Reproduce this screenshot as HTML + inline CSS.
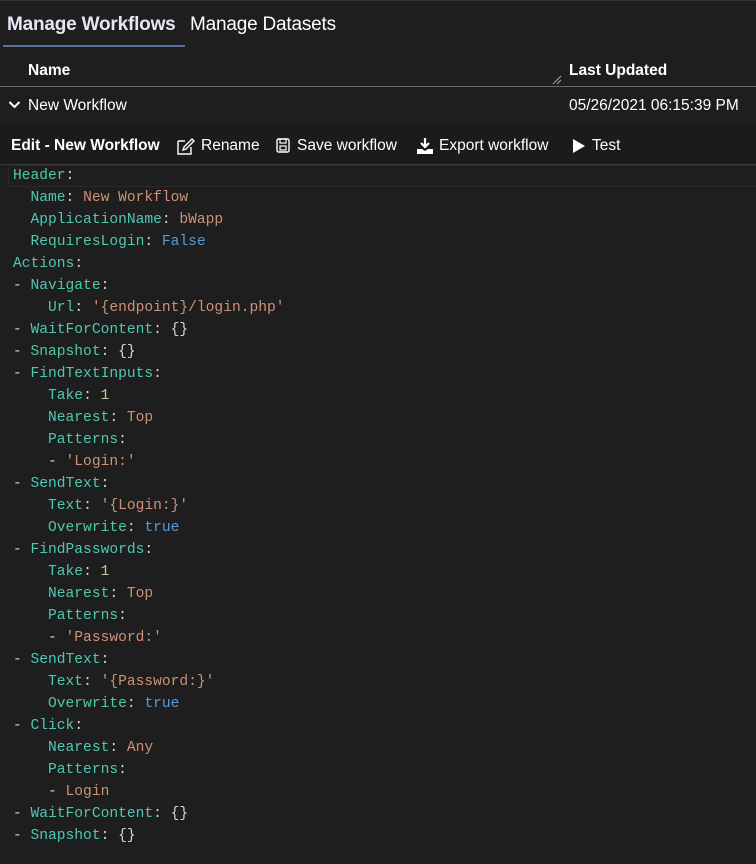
<!DOCTYPE html>
<html><head><meta charset="utf-8"><style>
*{margin:0;padding:0;box-sizing:border-box}
body{width:756px;height:864px;background:#1f1e1e;color:#fff;font-family:"Liberation Sans",sans-serif;overflow:hidden;position:relative;border-top:1px solid #333}
.abs{position:absolute;white-space:nowrap}
.tab1{left:7px;top:13px;font-size:19px;font-weight:bold;color:#e4e8f4;letter-spacing:-0.2px}
.tab2{left:190px;top:13px;font-size:19px;color:#fff;letter-spacing:-0.2px}
.ul{left:3px;top:44px;width:182px;height:2px;background:#5a6d9c}
.th{font-size:15.5px;font-weight:bold;top:61px}
.hline{left:0;top:85px;width:756px;height:1px;background:#6a6a6a}
.row{font-size:15.5px;top:96px}
.tb{left:0;top:124px;width:756px;height:40px;background:#1b1b1b;border-bottom:1px solid #3a3a3a}
.tbt{font-size:15.5px;top:136px}
.code{position:absolute;left:13px;top:164px;font-family:"Liberation Mono",monospace;font-size:14.6px;line-height:22px;color:#d4d4d4;white-space:pre}
.hl{position:absolute;left:8px;top:164px;width:748px;height:22px;border:1px solid #2a2a2a;border-right:none}
.k{color:#4ec9b0}.s{color:#ce9178}.b{color:#569cd6}.n{color:#b5cea8}
</style></head><body>
<div class="abs tab1">Manage Workflows</div>
<div class="abs tab2">Manage Datasets</div>
<div class="abs ul"></div>
<div class="abs th" style="left:28px">Name</div>
<div class="abs th" style="left:569px">Last Updated</div>
<svg class="abs" style="left:552px;top:74px" width="10" height="10"><path d="M1 9L9 1M5 9L9 5" stroke="#aaa" stroke-width="1"/></svg>
<div class="abs hline"></div>
<svg class="abs" style="left:8px;top:99px" width="13" height="10"><path d="M1.5 2L6.5 7L11.5 2" stroke="#fff" stroke-width="2" fill="none"/></svg>
<div class="abs row" style="left:28px">New Workflow</div>
<div class="abs row" style="left:569px">05/26/2021 06:15:39 PM</div>
<div class="abs tb"></div>
<div class="abs tbt" style="left:11px;font-weight:bold">Edit - New Workflow</div>
<svg class="abs" style="left:177px;top:137px" width="18" height="17"><path d="M1 3H8M1 3V16H14V9" stroke="#fff" stroke-width="1.4" fill="none"/><path d="M6 12L7 9L15 1L17 3L9 11Z" stroke="#fff" stroke-width="1.4" fill="none"/></svg>
<div class="abs tbt" style="left:201px">Rename</div>
<svg class="abs" style="left:276px;top:137px" width="14" height="15"><rect x="1" y="1" width="12" height="13" rx="1.5" stroke="#fff" stroke-width="1.4" fill="none"/><rect x="4" y="1" width="6" height="4" stroke="#fff" stroke-width="1.2" fill="none"/><rect x="4" y="8" width="6" height="4" stroke="#fff" stroke-width="1.2" fill="none"/></svg>
<div class="abs tbt" style="left:297px">Save workflow</div>
<svg class="abs" style="left:416px;top:136px" width="18" height="18"><path d="M9 1V10M5 6L9 10L13 6" stroke="#fff" stroke-width="2.2" fill="none"/><path d="M1 12H6L9 14L12 12H17V17H1Z" fill="#fff"/></svg>
<div class="abs tbt" style="left:439px">Export workflow</div>
<svg class="abs" style="left:572px;top:137px" width="14" height="16"><path d="M1 1L13 8L1 15Z" fill="#fff"/></svg>
<div class="abs tbt" style="left:592px">Test</div>
<div class="hl"></div>
<div class="code"><span class="k">Header</span>:
  <span class="k">Name</span>: <span class="s">New Workflow</span>
  <span class="k">ApplicationName</span>: <span class="s">bWapp</span>
  <span class="k">RequiresLogin</span>: <span class="b">False</span>
<span class="k">Actions</span>:
- <span class="k">Navigate</span>:
    <span class="k">Url</span>: <span class="s">'{endpoint}/login.php'</span>
- <span class="k">WaitForContent</span>: {}
- <span class="k">Snapshot</span>: {}
- <span class="k">FindTextInputs</span>:
    <span class="k">Take</span>: <span class="n">1</span>
    <span class="k">Nearest</span>: <span class="s">Top</span>
    <span class="k">Patterns</span>:
    - <span class="s">'Login:'</span>
- <span class="k">SendText</span>:
    <span class="k">Text</span>: <span class="s">'{Login:}'</span>
    <span class="k">Overwrite</span>: <span class="b">true</span>
- <span class="k">FindPasswords</span>:
    <span class="k">Take</span>: <span class="n">1</span>
    <span class="k">Nearest</span>: <span class="s">Top</span>
    <span class="k">Patterns</span>:
    - <span class="s">'Password:'</span>
- <span class="k">SendText</span>:
    <span class="k">Text</span>: <span class="s">'{Password:}'</span>
    <span class="k">Overwrite</span>: <span class="b">true</span>
- <span class="k">Click</span>:
    <span class="k">Nearest</span>: <span class="s">Any</span>
    <span class="k">Patterns</span>:
    - <span class="s">Login</span>
- <span class="k">WaitForContent</span>: {}
- <span class="k">Snapshot</span>: {}</div>
</body></html>
